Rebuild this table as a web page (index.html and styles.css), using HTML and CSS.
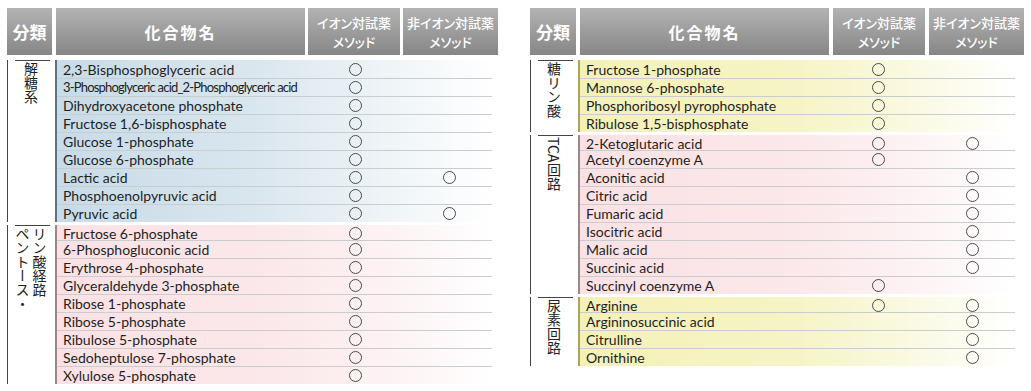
FILE: index.html
```html
<!DOCTYPE html>
<html lang="ja">
<head>
<meta charset="utf-8">
<title>代謝物一覧</title>
<link rel="stylesheet" href="styles.css">
</head>
<body>
<div class="page">
  <section class="table table-left">
    <div class="head">
      <div class="hcell hcat">分類</div>
      <div class="hcell hname">化合物名</div>
      <div class="hcell hmeth">イオン対試薬<br>メソッド</div>
      <div class="hcell hmeth">非イオン対試薬<br>メソッド</div>
    </div>
    <div class="group blue">
      <div class="cat"><span class="vt">解糖系</span></div>
      <div class="rows">
        <div class="row"><span class="name">2,3-Bisphosphoglyceric acid</span><span class="m"><i class="o"></i></span><span class="m n"></span></div>
        <div class="row"><span class="name cond">3-Phosphoglyceric acid_2-Phosphoglyceric acid</span><span class="m"><i class="o"></i></span><span class="m n"></span></div>
        <div class="row"><span class="name">Dihydroxyacetone phosphate</span><span class="m"><i class="o"></i></span><span class="m n"></span></div>
        <div class="row"><span class="name">Fructose 1,6-bisphosphate</span><span class="m"><i class="o"></i></span><span class="m n"></span></div>
        <div class="row"><span class="name">Glucose 1-phosphate</span><span class="m"><i class="o"></i></span><span class="m n"></span></div>
        <div class="row"><span class="name">Glucose 6-phosphate</span><span class="m"><i class="o"></i></span><span class="m n"></span></div>
        <div class="row"><span class="name">Lactic acid</span><span class="m"><i class="o"></i></span><span class="m n"><i class="o"></i></span></div>
        <div class="row"><span class="name">Phosphoenolpyruvic acid</span><span class="m"><i class="o"></i></span><span class="m n"></span></div>
        <div class="row"><span class="name">Pyruvic acid</span><span class="m"><i class="o"></i></span><span class="m n"><i class="o"></i></span></div>
      </div>
    </div>
    <div class="group pink">
      <div class="cat"><span class="vt lr">ペントース・<br>リン酸経路</span></div>
      <div class="rows">
        <div class="row"><span class="name">Fructose 6-phosphate</span><span class="m"><i class="o"></i></span><span class="m n"></span></div>
        <div class="row"><span class="name">6-Phosphogluconic acid</span><span class="m"><i class="o"></i></span><span class="m n"></span></div>
        <div class="row"><span class="name">Erythrose 4-phosphate</span><span class="m"><i class="o"></i></span><span class="m n"></span></div>
        <div class="row"><span class="name">Glyceraldehyde 3-phosphate</span><span class="m"><i class="o"></i></span><span class="m n"></span></div>
        <div class="row"><span class="name">Ribose 1-phosphate</span><span class="m"><i class="o"></i></span><span class="m n"></span></div>
        <div class="row"><span class="name">Ribose 5-phosphate</span><span class="m"><i class="o"></i></span><span class="m n"></span></div>
        <div class="row"><span class="name">Ribulose 5-phosphate</span><span class="m"><i class="o"></i></span><span class="m n"></span></div>
        <div class="row"><span class="name">Sedoheptulose 7-phosphate</span><span class="m"><i class="o"></i></span><span class="m n"></span></div>
        <div class="row"><span class="name">Xylulose 5-phosphate</span><span class="m"><i class="o"></i></span><span class="m n"></span></div>
      </div>
    </div>
  </section>

  <section class="table table-right">
    <div class="head">
      <div class="hcell hcat">分類</div>
      <div class="hcell hname">化合物名</div>
      <div class="hcell hmeth">イオン対試薬<br>メソッド</div>
      <div class="hcell hmeth">非イオン対試薬<br>メソッド</div>
    </div>
    <div class="group yellow">
      <div class="cat"><span class="vt">糖リン酸</span></div>
      <div class="rows">
        <div class="row"><span class="name">Fructose 1-phosphate</span><span class="m"><i class="o"></i></span><span class="m n"></span></div>
        <div class="row"><span class="name">Mannose 6-phosphate</span><span class="m"><i class="o"></i></span><span class="m n"></span></div>
        <div class="row"><span class="name">Phosphoribosyl pyrophosphate</span><span class="m"><i class="o"></i></span><span class="m n"></span></div>
        <div class="row"><span class="name">Ribulose 1,5-bisphosphate</span><span class="m"><i class="o"></i></span><span class="m n"></span></div>
      </div>
    </div>
    <div class="group pink">
      <div class="cat"><span class="vt">TCA回路</span></div>
      <div class="rows">
        <div class="row"><span class="name">2-Ketoglutaric acid</span><span class="m"><i class="o"></i></span><span class="m n"><i class="o"></i></span></div>
        <div class="row"><span class="name">Acetyl coenzyme A</span><span class="m"><i class="o"></i></span><span class="m n"></span></div>
        <div class="row"><span class="name">Aconitic acid</span><span class="m"></span><span class="m n"><i class="o"></i></span></div>
        <div class="row"><span class="name">Citric acid</span><span class="m"></span><span class="m n"><i class="o"></i></span></div>
        <div class="row"><span class="name">Fumaric acid</span><span class="m"></span><span class="m n"><i class="o"></i></span></div>
        <div class="row"><span class="name">Isocitric acid</span><span class="m"></span><span class="m n"><i class="o"></i></span></div>
        <div class="row"><span class="name">Malic acid</span><span class="m"></span><span class="m n"><i class="o"></i></span></div>
        <div class="row"><span class="name">Succinic acid</span><span class="m"></span><span class="m n"><i class="o"></i></span></div>
        <div class="row"><span class="name">Succinyl coenzyme A</span><span class="m"><i class="o"></i></span><span class="m n"></span></div>
      </div>
    </div>
    <div class="group yellow">
      <div class="cat"><span class="vt">尿素回路</span></div>
      <div class="rows">
        <div class="row"><span class="name">Arginine</span><span class="m"><i class="o"></i></span><span class="m n"><i class="o"></i></span></div>
        <div class="row"><span class="name">Argininosuccinic acid</span><span class="m"></span><span class="m n"><i class="o"></i></span></div>
        <div class="row"><span class="name">Citrulline</span><span class="m"></span><span class="m n"><i class="o"></i></span></div>
        <div class="row"><span class="name">Ornithine</span><span class="m"></span><span class="m n"><i class="o"></i></span></div>
      </div>
    </div>
  </section>
</div>
</body>
</html>
```
FILE: styles.css
```css
html, body {
  margin: 0;
  padding: 0;
  background: #ffffff;
}

body {
  font-family: Lato, "Noto Sans CJK JP", sans-serif;
  color: #222222;
}

.page {
  display: flex;
  gap: 31px;
  padding: 8px 0 0 7px;
}

.table {
  width: 492px;
  display: flex;
  flex-direction: column;
}

/* ---------- header ---------- */
.head {
  display: grid;
  grid-template-columns: 46px 249px 92px 95px;
  column-gap: 4px;
  height: 47px;
  margin-bottom: 5px;
}

.table-left .head {
  column-gap: 3px;
}
.table-left .head .hcat { margin-right: 1px; }

.hcell {
  background: linear-gradient(#b3b3b3, #868686);
  color: #ffffff;
  display: flex;
  align-items: center;
  justify-content: center;
  text-align: center;
  font-family: "Noto Sans CJK JP", sans-serif;
}

.hcat {
  font-size: 17px;
  font-weight: 700;
}

.hname {
  font-size: 16px;
  font-weight: 700;
  letter-spacing: 2px;
}

.hmeth {
  font-size: 13px;
  font-weight: 500;
  line-height: 19px;
  font-feature-settings: "palt";
  padding-top: 1px;
}

/* ---------- groups ---------- */
.group {
  display: flex;
}

.group + .group {
  margin-top: 3px;
}

.group + .group .row:first-child {
  height: 15px;
}

.cat {
  width: 48px;
  flex: none;
  position: relative;
  border-left: 1px solid #444444;
  display: flex;
  justify-content: center;
  padding-top: 2px;
  box-sizing: border-box;
}

.cat::before {
  content: "";
  position: absolute;
  top: 0;
  left: 7px;
  width: 35px;
  border-top: 1px solid #444444;
}

.vt {
  writing-mode: vertical-rl;
  font-family: "Noto Sans CJK JP", sans-serif;
  font-size: 14px;
  line-height: 17px;
  color: #222222;
  margin-right: 2px;
}

.vt.lr {
  writing-mode: vertical-lr;
}

.rows {
  flex: 1;
  border-left: 2px solid #5b7282;
  margin-right: 7px;
}

.blue .rows {
  border-left-color: #5a7384;
  background: linear-gradient(to right, #c7dbe8 0%, #d9e6ee 45%, #eef4f7 75%, #ffffff 100%);
}

.pink .rows {
  border-left-color: #9b8789;
  background: linear-gradient(to right, #fbe1e4 0%, #fbe8ea 50%, #fdf3f4 78%, #ffffff 100%);
}

.yellow .rows {
  border-left-color: #aaa552;
  background: linear-gradient(to right, #f4f1b7 0%, #f6f4c6 50%, #faf9e0 75%, #ffffff 100%);
}

.row {
  display: grid;
  grid-template-columns: 252px 92px 1fr;
  height: 18px;
  box-sizing: border-box;
  align-items: center;
}

.row + .row {
  border-top: 1px solid #c9cdd0;
}

.name {
  padding-left: 6px;
  font-size: 14px;
  line-height: 17px;
  white-space: nowrap;
  color: #1e1e1e;
}

.name.cond {
  font-size: 13px;
  letter-spacing: -0.8px;
}

.m {
  display: flex;
  justify-content: center;
  align-items: center;
}

.m.n {
  padding-left: 5px;
}

.o {
  display: block;
  width: 11px;
  height: 11px;
  border: 1px solid #4a4a4a;
  border-radius: 50%;
}
```
